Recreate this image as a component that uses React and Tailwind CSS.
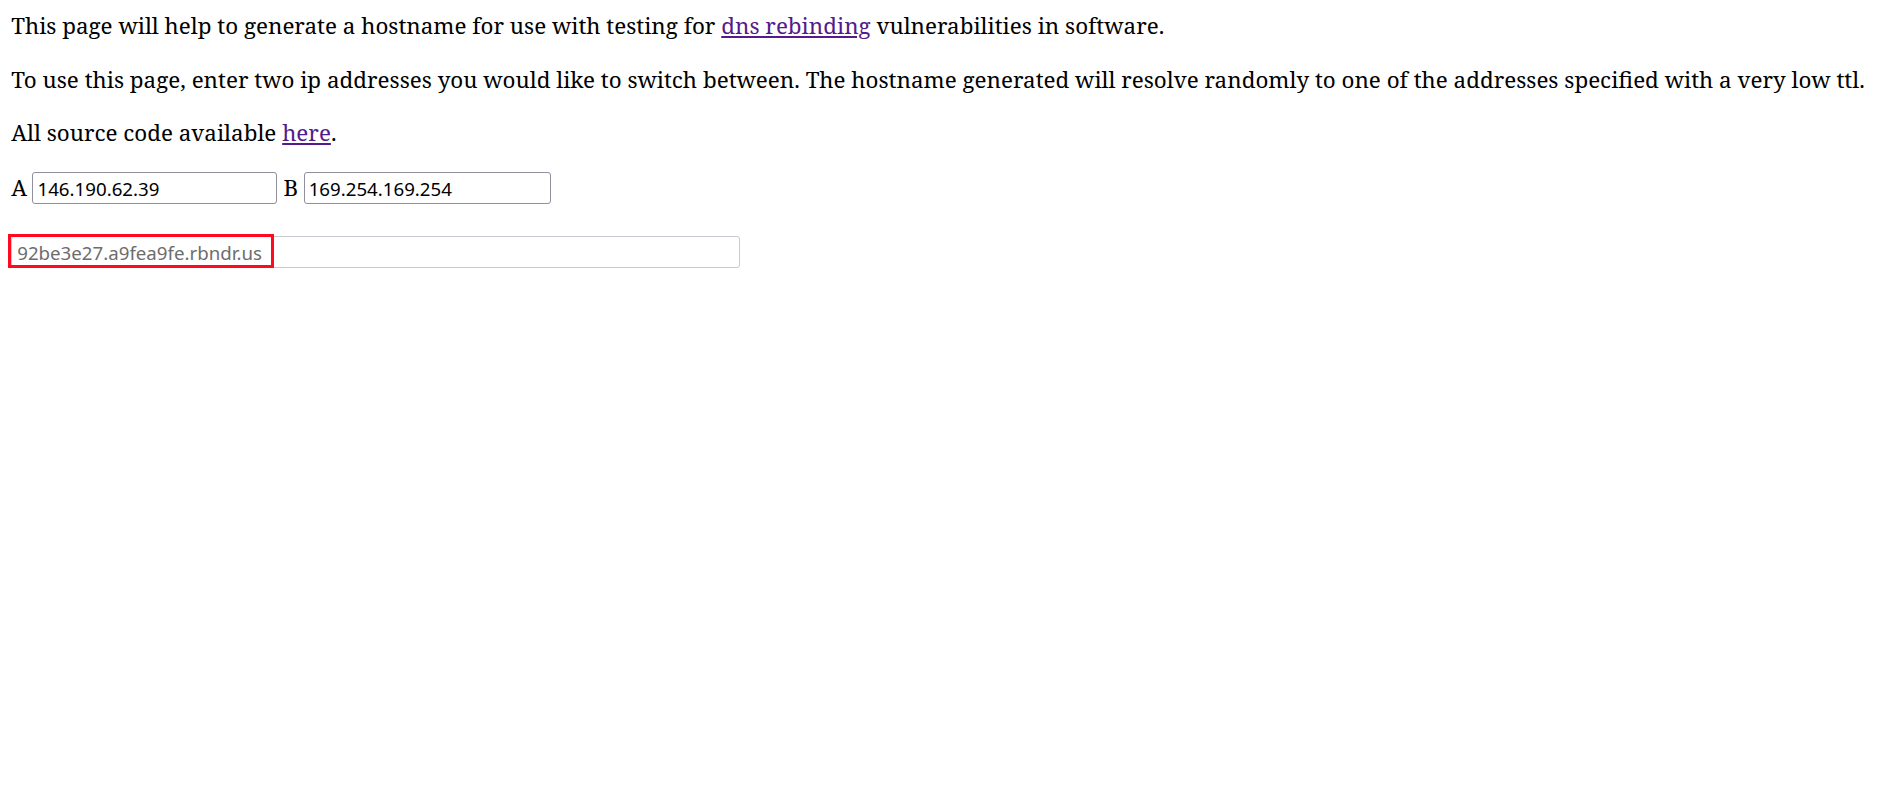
export default function App() {
  return (
    <div className="min-h-screen bg-white px-[11.2px] pt-[11px] font-['Noto_Serif','DejaVu_Serif',serif] text-[22.4px] leading-[30.5px] text-black">
      <p>
        This page will help to generate a hostname for use with testing for{" "}
        <a href="#" className="text-[#551a8b] underline">
          dns rebinding
        </a>{" "}
        vulnerabilities in software.
      </p>
      <p className="mt-[23px]">
        To use this page, enter two ip addresses you would like to switch between. The hostname generated will resolve
        randomly to one of the addresses specified with a very low ttl.
      </p>
      <p className="mt-[23px]">
        All source code available{" "}
        <a href="#" className="text-[#551a8b] underline">
          here
        </a>
        .
      </p>

      <div className="mt-[23.5px] flex items-center">
        <span>A</span>
        <input
          type="text"
          defaultValue="146.190.62.39"
          className="ml-[5.5px] h-[32px] w-[245px] rounded-[3px] border border-[#8f8f9d] bg-white px-[4px] font-['Noto_Sans',sans-serif] text-[18.7px] text-black outline-none"
        />
        <span className="ml-[6px]">B</span>
        <input
          type="text"
          defaultValue="169.254.169.254"
          className="ml-[5.5px] h-[32px] w-[247px] rounded-[3px] border border-[#8f8f9d] bg-white px-[4px] font-['Noto_Sans',sans-serif] text-[18.7px] text-black outline-none"
        />
      </div>

      <div className="relative mt-[32px] w-[729px]">
        <input
          type="text"
          readOnly
          value="92be3e27.a9fea9fe.rbndr.us"
          className="block h-[32px] w-full rounded-[3px] border border-[#c9c9cf] bg-white px-[5px] font-['Noto_Sans',sans-serif] text-[18.7px] text-[#6d6d6d] outline-none"
        />
        <div className="pointer-events-none absolute left-[-3px] top-[-2px] h-[34px] w-[266px] border-[3px] border-[#ff0a1f]" />
      </div>
    </div>
  );
}
